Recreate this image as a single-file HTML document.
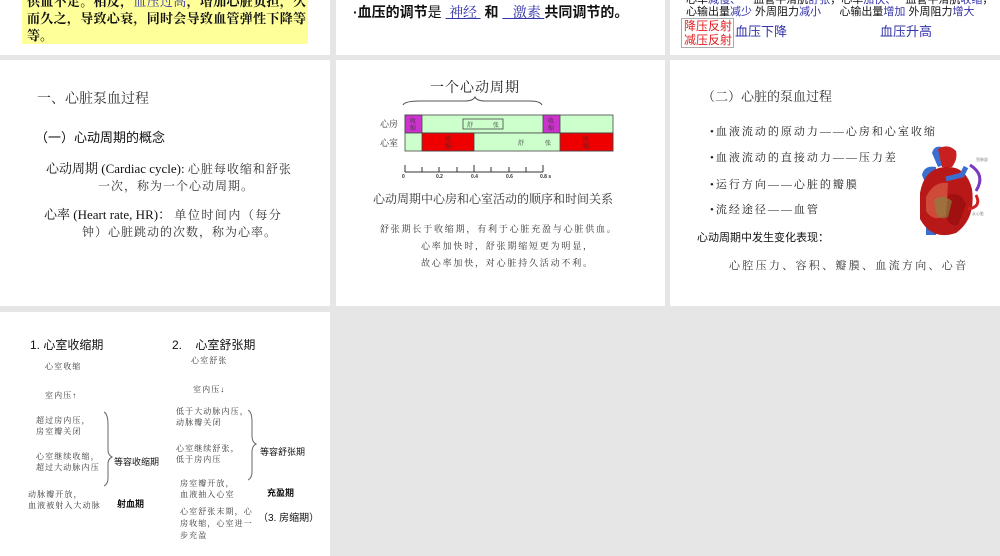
<!DOCTYPE html>
<html><head><meta charset="utf-8"><style>
body{margin:0;width:1000px;height:556px;background:#e6e6e6;position:relative;overflow:hidden;font-family:"Liberation Sans","Noto Sans CJK SC",sans-serif;color:#111}
.p{position:absolute;background:#fff}
.t{position:absolute;white-space:nowrap;line-height:1}
.s{font-family:"Liberation Serif","Noto Serif CJK SC",serif}
.b{color:#3333aa}
.bx{position:absolute;box-sizing:border-box;border:1px solid #555}
</style></head><body>
<!-- top row -->
<div class="p" style="left:0;top:0;width:330px;height:55px"></div>
<div class="p" style="left:336px;top:0;width:329px;height:55px"></div>
<div class="p" style="left:670px;top:0;width:330px;height:55px"></div>
<div style="position:absolute;left:22px;top:0;width:286px;height:44px;background:#ffff99"></div>
<div class="t s" style="left:27px;top:-5px;font-size:13px;font-weight:bold;letter-spacing:.3px">供血不足。相反，<span class="b" style="font-weight:normal">血压过高</span>，增加心脏负担，久</div>
<div class="t s" style="left:27px;top:12px;font-size:13px;font-weight:bold;letter-spacing:.3px">而久之，导致心衰，同时会导致血管弹性下降等</div>
<div class="t s" style="left:27px;top:29px;font-size:13px;font-weight:bold">等。</div>
<div class="t" style="left:353px;top:5px;font-size:14px;font-weight:bold">·血压的调节<span style="font-weight:normal">是</span> <span class="b s" style="font-weight:normal;text-decoration:underline">&nbsp;神经&nbsp;</span> 和 <span class="b s" style="font-weight:normal;text-decoration:underline">&nbsp;&nbsp;&nbsp;激素&nbsp;</span>共同调节的。</div>
<div class="t" style="left:686px;top:-5px;font-size:11px">心率<span class="b">减慢、</span>&nbsp;&nbsp;&nbsp;&nbsp;血管平滑肌<span class="b">舒张</span>，心率<span class="b">加快、</span>&nbsp;&nbsp;&nbsp;血管平滑肌<span class="b">收缩</span>，</div>
<div class="t" style="left:686px;top:7px;font-size:11px">心输出量<span class="b">减少</span> 外周阻力<span class="b">减小</span>&nbsp;&nbsp;&nbsp;&nbsp;&nbsp;&nbsp;心输出量<span class="b">增加</span> 外周阻力<span class="b">增大</span></div>
<div class="bx" style="left:681px;top:18px;width:53px;height:30px;border-color:#aaa"></div>
<div class="t" style="left:684px;top:19px;font-size:12px;color:#e02020;line-height:14px">降压反射<br>减压反射</div>
<div class="t" style="left:735px;top:25px;font-size:13px;color:#3333aa">血压下降</div>
<div class="t" style="left:880px;top:25px;font-size:13px;color:#3333aa">血压升高</div>

<!-- middle row -->
<div class="p" style="left:0;top:60px;width:330px;height:246px"></div>
<div class="p" style="left:336px;top:60px;width:329px;height:246px"></div>
<div class="p" style="left:670px;top:60px;width:330px;height:246px"></div>
<div class="t s" style="left:37px;top:93px;font-size:14px;color:#333">一、心脏泵血过程</div>
<div class="t" style="left:35px;top:131px;font-size:13px">（一）心动周期的概念</div>
<div class="t s" style="left:46px;top:162px;font-size:13px">心动周期 (Cardiac cycle): <span style="font-size:12px;color:#333;letter-spacing:1px">心脏每收缩和舒张</span></div>
<div class="t s" style="left:98px;top:180px;font-size:12px;color:#333;letter-spacing:1px">一次，称为一个心动周期。</div>
<div class="t s" style="left:44px;top:208px;font-size:13px">心率 (Heart rate, HR)： <span style="font-size:12px;color:#333;letter-spacing:1.5px">单位时间内（每分</span></div>
<div class="t s" style="left:82px;top:226px;font-size:12px;color:#333;letter-spacing:1px">钟）心脏跳动的次数，称为心率。</div>

<div class="t s" style="left:430px;top:82px;font-size:14px;color:#222;letter-spacing:1px">一个心动周期</div>
<svg style="position:absolute;left:370px;top:75px" width="260" height="110">
<path d="M33 30 Q35 26 50 26 L95 26 Q103 26 105 22 Q107 26 115 26 L160 26 Q170 26 172 30" fill="none" stroke="#555"/>
<rect x="35" y="40" width="208" height="18" fill="#ccffcc" stroke="#444" stroke-width=".8"/>
<rect x="35" y="40" width="17" height="18" fill="#cc33cc" stroke="#444" stroke-width=".8"/>
<rect x="173" y="40" width="17" height="18" fill="#cc33cc" stroke="#444" stroke-width=".8"/>
<rect x="93" y="44" width="40" height="10" fill="none" stroke="#444" stroke-width=".8"/>
<rect x="35" y="58" width="208" height="18" fill="#ccffcc" stroke="#444" stroke-width=".8"/>
<rect x="52" y="58" width="52" height="18" fill="#ee0000" stroke="#444" stroke-width=".8"/>
<rect x="190" y="58" width="53" height="18" fill="#ee0000" stroke="#444" stroke-width=".8"/>
<g font-size="6" font-family="Noto Serif CJK SC,serif" fill="#333"><text x="40" y="48">收</text><text x="40" y="55">缩</text><text x="178" y="48">收</text><text x="178" y="55">缩</text>
<text x="97" y="52">舒</text><text x="123" y="52">张</text><text x="75" y="66">收</text><text x="75" y="73">缩</text><text x="213" y="66">收</text><text x="213" y="73">缩</text><text x="148" y="70">舒</text><text x="175" y="70">张</text></g>
<g font-size="9" font-family="Noto Serif CJK SC,serif" fill="#333"><text x="10" y="52">心房</text><text x="10" y="71">心室</text></g>
<path d="M35 97 H173 M35 90 V97 M52 92 V97 M69 92 V97 M87 92 V97 M104 90 V97 M121 92 V97 M139 92 V97 M156 92 V97 M173 90 V97" stroke="#333" fill="none"/>
<g font-size="5" font-weight="bold" fill="#333"><text x="32" y="103">0</text><text x="66" y="103">0.2</text><text x="101" y="103">0.4</text><text x="136" y="103">0.6</text><text x="170" y="103">0.8 s</text></g>
</svg>
<div class="t s" style="left:373px;top:193px;font-size:12px;color:#333">心动周期中心房和心室活动的顺序和时间关系</div>
<div class="t s" style="left:380px;top:225px;font-size:9px;color:#333;letter-spacing:1.8px">舒张期长于收缩期，有利于心脏充盈与心脏供血。</div>
<div class="t s" style="left:421px;top:242px;font-size:9px;color:#333;letter-spacing:1.8px">心率加快时，舒张期缩短更为明显，</div>
<div class="t s" style="left:421px;top:259px;font-size:9px;color:#333;letter-spacing:1.8px">故心率加快，对心脏持久活动不利。</div>

<div class="t s" style="left:702px;top:90px;font-size:13px;color:#333">（二）心脏的泵血过程</div>
<div class="t s" style="left:710px;top:127px;font-size:11px;color:#222;letter-spacing:2px">•血液流动的原动力——心房和心室收缩</div>
<div class="t s" style="left:710px;top:153px;font-size:11px;color:#222;letter-spacing:2px">•血液流动的直接动力——压力差</div>
<div class="t s" style="left:710px;top:180px;font-size:11px;color:#222;letter-spacing:2px">•运行方向——心脏的瓣膜</div>
<div class="t s" style="left:710px;top:205px;font-size:11px;color:#222;letter-spacing:2px">•流经途径——血管</div>
<div class="t" style="left:697px;top:233px;font-size:11px;color:#111">心动周期中发生变化表现：</div>
<div class="t s" style="left:729px;top:261px;font-size:11px;color:#333;letter-spacing:2.3px">心腔压力、容积、瓣膜、血流方向、心音</div>
<svg style="position:absolute;left:912px;top:145px" width="80" height="95">
<path d="M20 8 Q22 0 30 2 L32 20 L26 22Z" fill="#3a6fd0"/>
<path d="M10 30 Q12 20 24 22 L24 90 L14 90 L14 40Z" fill="#3a6fd0"/>
<path d="M26 4 Q36 -2 44 6 Q46 14 40 22 L30 22Z" fill="#c82020"/>
<path d="M8 48 Q12 24 32 22 Q54 20 60 44 Q64 74 44 88 Q20 96 8 74Z" fill="#b81818"/>
<path d="M14 52 Q22 36 36 38 L34 70 Q22 78 14 66Z" fill="#d04a3a"/>
<path d="M36 50 Q50 46 54 60 L46 80 Q36 82 34 70Z" fill="#a01010"/>
<path d="M22 55 Q30 48 40 56 L36 72 Q28 76 24 68Z" fill="#8a8040" opacity=".7"/>
<path d="M34 34 L50 30 L54 22" stroke="#3a6fd0" stroke-width="5" fill="none"/>
<path d="M58 20 Q74 30 64 46" stroke="#7a3ac0" stroke-width="3" fill="none"/>
<path d="M64 50 Q70 62 56 64" stroke="#d02020" stroke-width="3" fill="none"/>
<text x="64" y="16" font-size="4" fill="#888">到肺部</text><text x="60" y="70" font-size="4" fill="#888">从心脏</text>
</svg>

<!-- bottom row -->
<div class="p" style="left:0;top:312px;width:330px;height:244px"></div>
<div class="t" style="left:30px;top:339px;font-size:12px">1. 心室收缩期</div>
<div class="t" style="left:172px;top:339px;font-size:12px">2.&nbsp;&nbsp;&nbsp;&nbsp;心室舒张期</div>
<div style="font-family:'Liberation Serif','Noto Serif CJK SC',serif;font-size:8px;color:#333;letter-spacing:1.1px">
<div class="t" style="left:45px;top:363px">心室收缩</div>
<div class="t" style="left:45px;top:392px">室内压↑</div>
<div class="t" style="left:36px;top:415px;line-height:11px">超过房内压，<br>房室瓣关闭</div>
<div class="t" style="left:36px;top:451px;line-height:11px">心室继续收缩，<br>超过大动脉内压</div>
<div class="t" style="left:28px;top:489px;line-height:11px">动脉瓣开放，<br>血液被射入大动脉</div>
<div class="t" style="left:191px;top:357px">心室舒张</div>
<div class="t" style="left:193px;top:386px">室内压↓</div>
<div class="t" style="left:176px;top:406px;line-height:11px">低于大动脉内压，<br>动脉瓣关闭</div>
<div class="t" style="left:176px;top:443px;line-height:11px">心室继续舒张，<br>低于房内压</div>
<div class="t" style="left:180px;top:478px;line-height:11px">房室瓣开放，<br>血液抽入心室</div>
<div class="t" style="left:180px;top:506px;line-height:12px">心室舒张末期，心<br>房收缩，心室进一<br>步充盈</div>
</div>
<svg style="position:absolute;left:100px;top:410px" width="160" height="80">
<path d="M4 2 Q8 4 8 15 V40 Q8 45 12 47 Q8 49 8 54 V68 Q8 74 4 76" stroke="#666" fill="none"/>
<path d="M148 0 Q152 2 152 12 V26 Q152 32 156 34 Q152 36 152 42 V62 Q152 68 148 70" stroke="#666" fill="none"/>
</svg>
<div class="t" style="left:114px;top:458px;font-size:9px">等容收缩期</div>
<div class="t" style="left:117px;top:500px;font-size:9px;font-weight:bold">射血期</div>
<div class="t" style="left:260px;top:448px;font-size:9px">等容舒张期</div>
<div class="t" style="left:267px;top:489px;font-size:9px;font-weight:bold">充盈期</div>
<div class="t" style="left:258px;top:514px;font-size:10px">（3. 房缩期）</div>
</body></html>
